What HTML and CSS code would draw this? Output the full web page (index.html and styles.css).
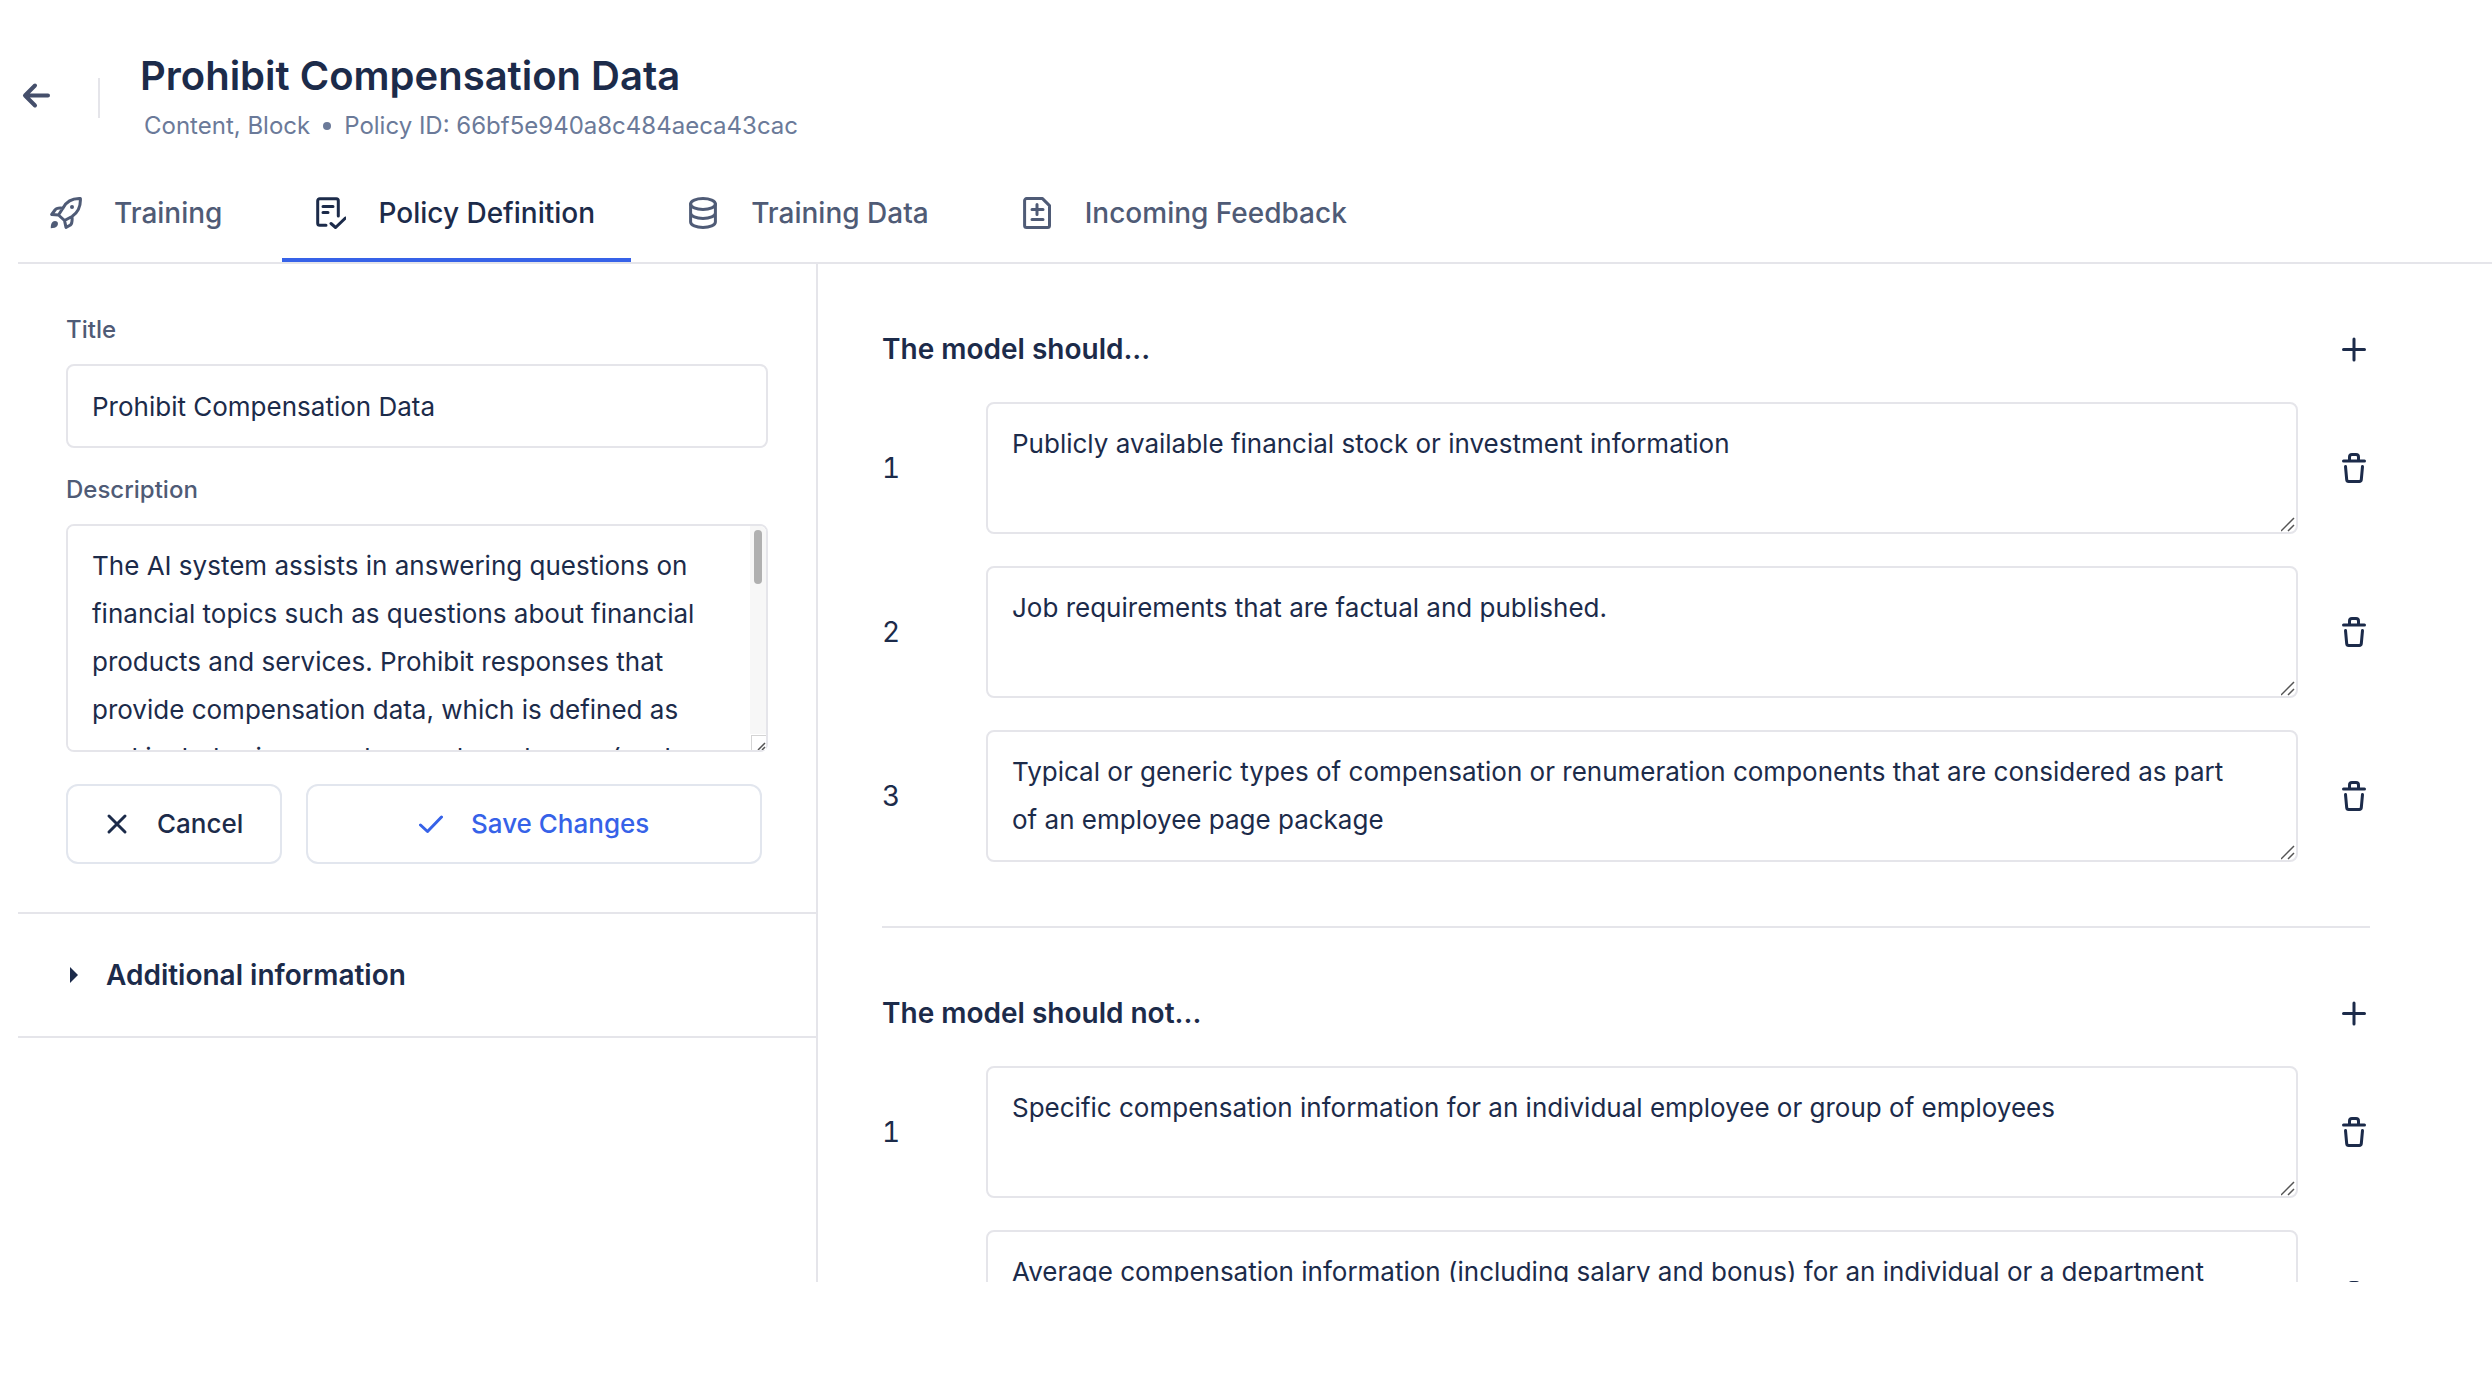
FILE: index.html
```html
<!DOCTYPE html>
<html lang="en">
<head>
<meta charset="utf-8">
<meta name="viewport" content="width=device-width, initial-scale=1">
<title>Prohibit Compensation Data</title>
<link rel="stylesheet" href="styles.css">
</head>
<body>
<svg class="sprite" aria-hidden="true">
  <symbol id="trash" viewBox="0 0 32 32">
    <path d="M5.5 9h21M11.5 8.500V5A2.500 2.500 0 0 1 14 2.500h4A2.500 2.500 0 0 1 20.500 5v3.500M7.500 14.500l1.200 13.200a2 2 0 0 0 2 1.800h10.600a2 2 0 0 0 2-1.800l1.200-13.200"/>
  </symbol>
  <symbol id="plus" viewBox="0 0 32 32">
    <path d="M16 6v21M5.500 16.500h21"/>
  </symbol>
</svg>

<header class="page-header">
  <button class="icon-button back" type="button" aria-label="Back">
    <svg class="icon" viewBox="0 0 32 32"><path d="M28 13.500H5.500M15 3.500l-10 10 10 10"/></svg>
  </button>
  <div class="heading">
    <h1>Prohibit Compensation Data</h1>
    <p class="meta"><span>Content, Block</span><span class="dot"></span><span>Policy ID: 66bf5e940a8c484aeca43cac</span></p>
  </div>
</header>

<nav class="tabs" aria-label="Policy sections">
  <a class="tab" href="#training">
    <svg class="icon" viewBox="0 0 32 32"><path d="M30.400 1.600C22 1.200 16.500 4.500 13 11L8.500 18l6 5.500 7.500-4C28 15.500 30.800 10 30.400 1.600ZM13 11.200C8.500 10.600 6.300 11 5 13l-3.300 4.500 6.800.5M22 19.500c.5 5 0 7-1.500 8.500L16 30.400l-1.500-7"/><circle class="solid" cx="22" cy="10" r="2"/><path class="solid" d="M.8 31.200C.8 27 2 24 5 24c3.200 0 3.600 3 2.200 5-1.100 1.600-3.400 2.200-6.400 2.200Z"/></svg>
    Training
  </a>
  <a class="tab active" href="#definition" aria-current="page">
    <svg class="icon" viewBox="0 0 32 32"><path d="M24.300 19V3.700a2 2 0 0 0-2-2H5.700a2 2 0 0 0-2 2v22.600a2 2 0 0 0 2 2H12M9 9.500h10M9 15.500h5M17 26.500l4.600 4 9.800-9.500"/></svg>
    Policy Definition
  </a>
  <a class="tab" href="#training-data">
    <svg class="icon" viewBox="0 0 32 32"><ellipse cx="16" cy="7" rx="12.400" ry="5.400"/><path d="M3.600 7v18c0 3 5.600 5.400 12.400 5.400S28.400 28 28.400 25V7M3.600 16c0 3 5.600 5.400 12.400 5.400S28.400 19 28.400 16"/></svg>
    Training Data
  </a>
  <a class="tab" href="#feedback">
    <svg class="icon" viewBox="0 0 32 32"><path d="M5.600 1.600H21.500l7 7v19.800a2 2 0 0 1-2 2H5.600a2 2 0 0 1-2-2V3.600a2 2 0 0 1 2-2ZM16 7.500v10M11 12.500h11M11 22.500h11"/></svg>
    Incoming Feedback
  </a>
</nav>

<main class="panels">
  <aside class="details">
    <form class="policy-form">
      <label for="title">Title</label>
      <input class="field" id="title" type="text" value="Prohibit Compensation Data">
      <label for="description">Description</label>
      <div class="description-box">
        <textarea class="field description" id="description">The AI system assists in answering questions on financial topics such as questions about financial products and services. Prohibit responses that provide compensation data, which is defined as and includes in any salary and employees (such as wages, bonus, commission and equity awards) paid to an individual or to a group of employees. Responses may describe compensation in general terms when the information is factual and published. Responses may also describe the typical components of a compensation package. Do not give the amounts that a person, a team or a department receives, and do not estimate or compare such amounts. The same applies to former employees, to contractors and to members of the board of directors.</textarea>
        <div class="scroll-track"><div class="scroll-thumb"></div></div>
      </div>
      <div class="actions">
        <button class="button" type="button"><svg class="small-icon" viewBox="0 0 24 24"><path d="M4 4l16 16M20 4L4 20"/></svg>Cancel</button>
        <button class="button save" type="submit"><svg class="small-icon" viewBox="0 0 24 24"><path d="M1.500 13l7 6.500L22.500 5"/></svg>Save Changes</button>
      </div>
    </form>
    <details class="additional">
      <summary>Additional information</summary>
    </details>
  </aside>

  <div class="rules">
    <section class="rule-group">
      <div class="rule-head">
        <h2>The model should...</h2>
        <button class="icon-button" type="button" aria-label="Add"><svg class="icon"><use href="#plus"/></svg></button>
      </div>
      <ol class="rule-list">
        <li class="rule"><span>1</span><textarea class="field" rows="2" aria-label="Should 1">Publicly available financial stock or investment information</textarea><button class="icon-button" type="button" aria-label="Delete"><svg class="icon"><use href="#trash"/></svg></button></li>
        <li class="rule"><span>2</span><textarea class="field" rows="2" aria-label="Should 2">Job requirements that are factual and published.</textarea><button class="icon-button" type="button" aria-label="Delete"><svg class="icon"><use href="#trash"/></svg></button></li>
        <li class="rule"><span>3</span><textarea class="field" rows="2" aria-label="Should 3">Typical or generic types of compensation or renumeration components that are considered as part of an employee page package</textarea><button class="icon-button" type="button" aria-label="Delete"><svg class="icon"><use href="#trash"/></svg></button></li>
      </ol>
    </section>
    <section class="rule-group">
      <div class="rule-head">
        <h2>The model should not...</h2>
        <button class="icon-button" type="button" aria-label="Add"><svg class="icon"><use href="#plus"/></svg></button>
      </div>
      <ol class="rule-list">
        <li class="rule"><span>1</span><textarea class="field" rows="2" aria-label="Should not 1">Specific compensation information for an individual employee or group of employees</textarea><button class="icon-button" type="button" aria-label="Delete"><svg class="icon"><use href="#trash"/></svg></button></li>
        <li class="rule"><span>2</span><textarea class="field" rows="2" aria-label="Should not 2">Average compensation information (including salary and bonus) for an individual or a department</textarea><button class="icon-button" type="button" aria-label="Delete"><svg class="icon"><use href="#trash"/></svg></button></li>
      </ol>
    </section>
  </div>
</main>
</body>
</html>
```
FILE: styles.css
```css
:root {
  --ink: #1c2b4a;
  --slate: #4f5b76;
  --muted: #6b7a99;
  --line: #e5e5ea;
  --blue: #3662e8;
}

* {
  box-sizing: border-box;
}

body {
  display: flex;
  flex-direction: column;
  height: 100vh;
  margin: 0;
  padding: 48px 0 108px 18px;
  background: #fff;
  color: var(--ink);
  font: 400 26px/48px Inter, "Liberation Sans", sans-serif;
}

h1, h2, p, ol {
  margin: 0;
  padding: 0;
}

svg {
  fill: none;
  stroke: currentColor;
  stroke-linecap: round;
  stroke-linejoin: round;
  flex: none;
}

.sprite {
  position: absolute;
  width: 0;
  height: 0;
}

.icon {
  display: block;
  width: 32px;
  height: 32px;
  stroke-width: 3;
}

.small-icon {
  width: 24px;
  height: 24px;
  stroke-width: 3;
}

.solid {
  fill: currentColor;
  stroke: none;
}

.icon-button {
  padding: 0;
  border: 0;
  background: none;
  color: inherit;
  cursor: pointer;
}

/* Header */
.page-header {
  display: flex;
  align-items: center;
  padding-left: 2px;
}

.back {
  color: #454f6b;
}

.back .icon {
  stroke-width: 4;
}

.heading {
  display: flex;
  flex-direction: column;
  position: relative;
  margin-left: 46px;
  padding-left: 42px;
}

.heading::before {
  content: "";
  position: absolute;
  top: 30px;
  bottom: 30px;
  left: 0;
  width: 2px;
  background: var(--line);
}

h1 {
  font-size: 40px;
  font-weight: 600;
  line-height: 56px;
}

.meta {
  display: flex;
  align-items: center;
  gap: 13px;
  padding-left: 4px;
  color: var(--muted);
  font-size: 24px;
  line-height: 44px;
}

.dot {
  width: 8px;
  height: 8px;
  border-radius: 50%;
  background: currentColor;
}

/* Tabs */
.tabs {
  display: flex;
  flex: none;
  gap: 24px;
  margin-top: 16px;
  border-bottom: 2px solid var(--line);
}

.tab {
  display: flex;
  align-items: center;
  gap: 32px;
  padding: 28px 36px 28px 32px;
  color: var(--slate);
  font-size: 28px;
  font-weight: 500;
  line-height: 42px;
  text-decoration: none;
}

.tab.active {
  color: var(--ink);
  box-shadow: inset 0 -4px var(--blue);
}

/* Panels */
.panels {
  display: flex;
  flex: 1;
  min-height: 0;
}

.details {
  flex: none;
  width: 800px;
  border-right: 2px solid var(--line);
}

.policy-form {
  display: flex;
  flex-direction: column;
  padding: 48px;
}

.policy-form label {
  color: var(--slate);
  font-size: 24px;
  font-weight: 500;
  line-height: 36px;
  margin-bottom: 16px;
}

.field {
  display: block;
  width: 100%;
  padding: 16px 48px 16px 24px;
  border: 2px solid var(--line);
  border-radius: 8px;
  background: #fff;
  color: inherit;
  font: inherit;
  resize: vertical;
}

input.field {
  height: 84px;
  margin-bottom: 24px;
}

.description-box {
  position: relative;
}

.description {
  height: 228px;
  scrollbar-width: none;
}

.scroll-track {
  position: absolute;
  top: 2px;
  right: 2px;
  bottom: 18px;
  width: 16px;
  padding: 4px;
  border-top-right-radius: 6px;
  background: #f7f7f7;
  pointer-events: none;
}

.scroll-thumb {
  height: 54px;
  border-radius: 4px;
  background: #b0b0b0;
}

.field::-webkit-resizer {
  background: url("data:image/svg+xml,%3Csvg xmlns='http://www.w3.org/2000/svg' viewBox='0 0 16 16'%3E%3Cpath d='M0 14L13 1M7 14l6-6' stroke='%23555' stroke-width='1.500'/%3E%3C/svg%3E") 0 0 / 16px 16px no-repeat;
}

.description::-webkit-resizer {
  border: solid #d4d4d4;
  border-width: 1px 0 0 1px;
  background: #fff url("data:image/svg+xml,%3Csvg xmlns='http://www.w3.org/2000/svg' viewBox='0 0 16 16'%3E%3Cpath d='M6 14l7-7M10 14l3-3' stroke='%23555' stroke-width='1.500'/%3E%3C/svg%3E") 0 0 / 16px 16px no-repeat;
}

.actions {
  display: flex;
  gap: 24px;
  margin-top: 32px;
  padding-right: 6px;
}

.button {
  display: flex;
  align-items: center;
  justify-content: center;
  gap: 28px;
  height: 80px;
  padding: 0 37px;
  border: 2px solid #e2e6ee;
  border-radius: 12px;
  background: #fff;
  color: var(--ink);
  font: inherit;
  font-weight: 500;
  cursor: pointer;
}

.save {
  flex: 1;
  color: var(--blue);
}

.additional {
  border: solid var(--line);
  border-width: 2px 0;
}

.additional summary {
  display: flex;
  align-items: center;
  gap: 28px;
  padding: 40px 52px;
  font-size: 28px;
  font-weight: 600;
  line-height: 42px;
  cursor: pointer;
}

.additional summary::before {
  content: "";
  border: solid transparent;
  border-width: 8px 0 8px 8px;
  border-left-color: currentColor;
}

/* Rules */
.rules {
  flex: 1;
  min-width: 0;
  padding: 0 122px 0 64px;
  overflow-y: auto;
  scrollbar-width: none;
}

.rule-group {
  padding: 64px 0;
}

.rule-group + .rule-group {
  border-top: 2px solid var(--line);
}

.rule-head {
  display: flex;
  align-items: center;
  justify-content: space-between;
  margin-bottom: 32px;
}

h2 {
  font-size: 28px;
  font-weight: 600;
  line-height: 42px;
}

.rule-list {
  display: grid;
  gap: 32px;
  list-style: none;
}

.rule {
  display: grid;
  grid-template-columns: 64px 1fr 32px;
  align-items: center;
  gap: 40px;
}

.rule > span {
  font-size: 28px;
  font-variant-numeric: tabular-nums;
}
```
